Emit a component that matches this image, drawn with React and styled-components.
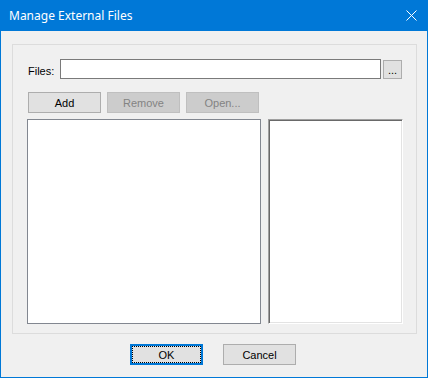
import React from "react";
import styled, { createGlobalStyle } from "styled-components";

const Global = createGlobalStyle`
  html, body { margin: 0; padding: 0; background: #ffffff; }
  * { box-sizing: border-box; }
`;

const Window = styled.div`
  width: 428px;
  height: 378px;
  border: 1px solid #0078d7;
  border-top: none;
  background: #f0f0f0;
  display: flex;
  flex-direction: column;
  font-family: "Liberation Sans", Arial, sans-serif;
  font-size: 11px;
  color: #000;
`;

const TitleBar = styled.div`
  height: 31px;
  margin: 0 -1px;
  background: #0078d7;
  display: flex;
  align-items: center;
  justify-content: space-between;
  padding: 0 10px 1px 9px;
  color: #fff;
  font-family: "Noto Sans", "Open Sans", sans-serif;
  font-size: 12px;
`;

const Close = styled.svg`
  width: 11px;
  height: 11px;
  margin-right: 1px;
`;

const Group = styled.div`
  margin: 13px 10px 0 11px;
  height: 290px;
  border: 1px solid #dcdcdc;
  padding: 14px 13px 0 14px;
  display: flex;
  flex-direction: column;
`;

const FilesRow = styled.div`
  display: flex;
  align-items: flex-start;
  height: 20px;
`;

const Label = styled.span`
  width: 33px;
  padding-left: 1px;
  line-height: 20px;
  padding-top: 2px;
`;

const TextBox = styled.div`
  width: 321px;
  height: 20px;
  background: #fff;
  border: 1px solid #7a7a7a;
`;

const Button = styled.div`
  width: ${(p) => p.$w || 73}px;
  height: ${(p) => p.$h || 21}px;
  margin-left: ${(p) => p.$ml || 0}px;
  margin-top: ${(p) => p.$mt || 0}px;
  background: ${(p) => (p.$disabled ? "#cccccc" : "#e1e1e1")};
  border: ${(p) => (p.$default ? "2px solid #0078d7" : p.$disabled ? "1px solid #bfbfbf" : "1px solid #adadad")};
  color: ${(p) => (p.$disabled ? "#838383" : "#000")};
  display: flex;
  align-items: center;
  justify-content: center;
  flex: none;
`;

const Focus = styled.div`
  width: 100%;
  height: 100%;
  border: 1px dotted #000;
  display: flex;
  align-items: center;
  justify-content: center;
`;

const ButtonRow = styled.div`
  display: flex;
  gap: 6px;
  margin-top: 13px;
  padding-left: 1px;
`;

const Lists = styled.div`
  display: flex;
  gap: 7px;
  margin-top: 6px;
`;

const ListBox = styled.div`
  width: 234px;
  height: 205px;
  background: #fff;
  border: 1px solid #828790;
`;

const SunkenBox = styled.div`
  width: 135px;
  height: 205px;
  background: #fff;
  border-top: 1px solid #a0a0a0;
  border-left: 1px solid #a0a0a0;
  border-right: 1px solid #ffffff;
  border-bottom: 1px solid #ffffff;
  box-shadow: inset 1px 1px 0 #696969, inset -1px -1px 0 #e3e3e3;
`;

const Footer = styled.div`
  display: flex;
  justify-content: center;
  gap: 20px;
  margin-top: 10px;
  padding-right: 2px;
`;

export default function App() {
  return (
    <>
      <Global />
      <Window>
        <TitleBar>
          <span>Manage External Files</span>
          <Close viewBox="0 0 11 11">
            <path d="M0.5 0.5 L10.5 10.5 M10.5 0.5 L0.5 10.5" stroke="#fff" strokeWidth="1" fill="none" />
          </Close>
        </TitleBar>
        <Group>
          <FilesRow>
            <Label>Files:</Label>
            <TextBox />
            <Button $w={19} $h={19} $ml={2} $mt={1}>...</Button>
          </FilesRow>
          <ButtonRow>
            <Button>Add</Button>
            <Button $disabled>Remove</Button>
            <Button $disabled>Open...</Button>
          </ButtonRow>
          <Lists>
            <ListBox />
            <SunkenBox />
          </Lists>
        </Group>
        <Footer>
          <Button $default>
            <Focus>OK</Focus>
          </Button>
          <Button>Cancel</Button>
        </Footer>
      </Window>
    </>
  );
}
